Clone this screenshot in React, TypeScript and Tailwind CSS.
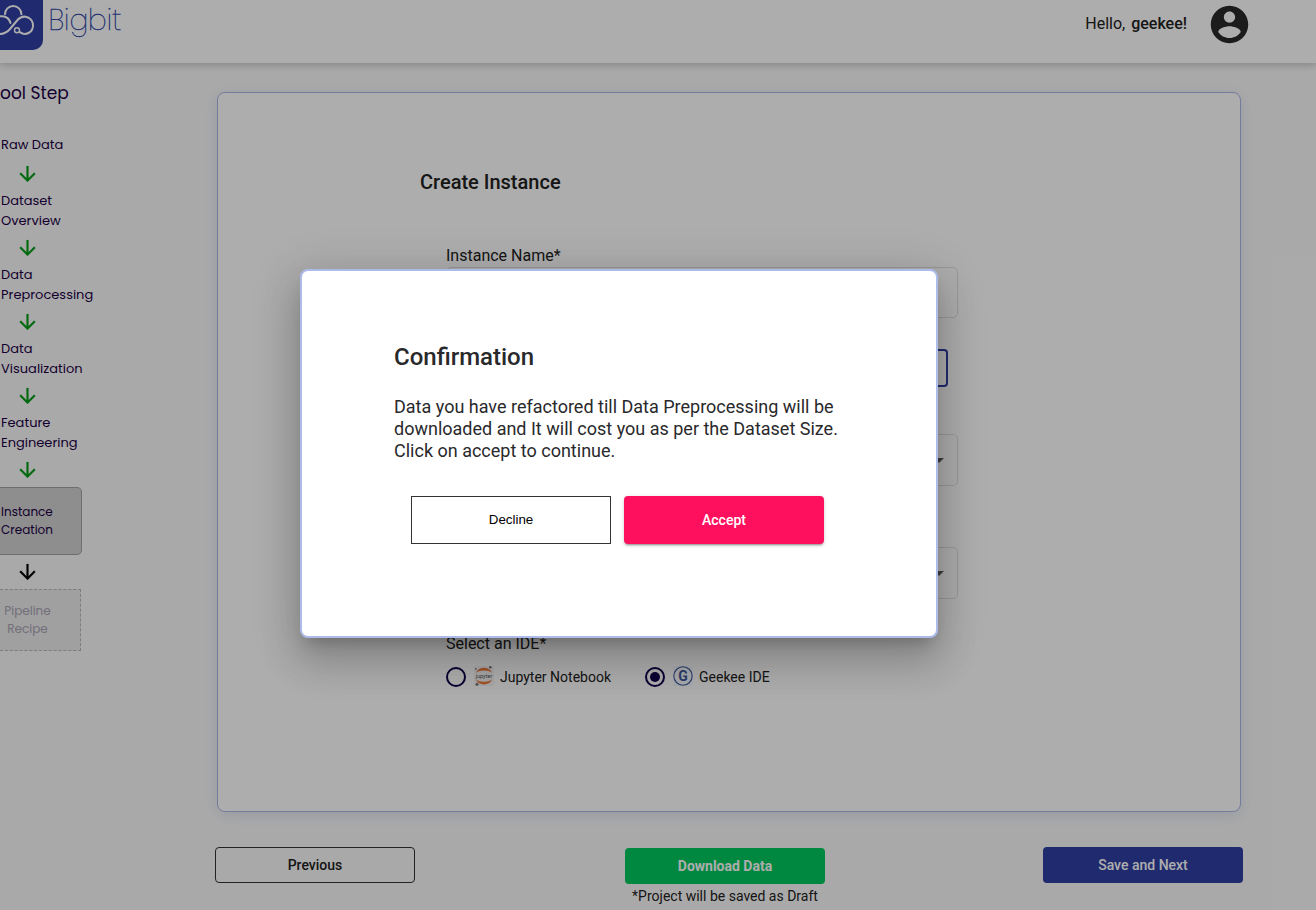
import React from "react";

const DownArrow = ({ color }: { color: string }) => (
  <div className="flex h-[34px] w-[55px] items-center justify-center">
    <svg viewBox="0.5 0 24 24" className={`h-6 w-6 ${color}`} fill="currentColor">
      <path d="M20 12l-1.41-1.41L13 16.17V4h-2v12.17l-5.58-5.59L4 12l8 8 8-8z" stroke="currentColor" strokeWidth="0.150" />
    </svg>
  </div>
);

const Step = ({ lines }: { lines: string[] }) => (
  <div className="pl-px text-[13px] leading-5 text-[#1c0045]">
    {lines.map((line) => (
      <div key={line} className="whitespace-nowrap">
        {line}
      </div>
    ))}
  </div>
);

const Logo = () => (
  <div className="flex h-[50px] w-[43px] overflow-hidden rounded-br-[10px] bg-[#303ea3]">
    <svg width="43" height="50" viewBox="0 0 43 50" fill="none" stroke="#fff" strokeWidth="2" strokeLinecap="round">
      <path d="M5 14.2a8.200 8.200 0 0 1 16.400 0" />
      <path d="M-2 16.800C4 15 9 17.500 10.500 23" />
      <path d="M-2 34C3.500 34.300 7 32.500 10 29L17.500 20C20.500 16.800 25 15.800 29 18C34.500 21.500 34.300 30 28.500 33C25.500 34.500 22.500 34 19.800 32.200" />
      <circle cx="17" cy="30.200" r="2.500" strokeWidth="1.500" />
    </svg>
  </div>
);

const JupyterIcon = () => (
  <svg width="20" height="20" viewBox="0 0 20 20" className="bg-[#f5f5f5]">
    <path d="M2 6.800C4.500 0 15.500 0 18 6.800 14 3.700 6 3.700 2 6.800z" fill="#f07a3c" />
    <path d="M2 13.500C4.500 20 15.500 20 18 13.500 14 16.500 6 16.500 2 13.500z" fill="#f07a3c" />
    <circle cx="16.300" cy="1.300" r="1.300" fill="#777" />
    <circle cx="1.800" cy="2.800" r="0.900" fill="#777" />
    <circle cx="3" cy="18.300" r="1.500" fill="#777" />
    <text x="10" y="11.600" textAnchor="middle" fontSize="5.500" fontFamily="Roboto, sans-serif" fill="#555">
      jupyter
    </text>
  </svg>
);

const GeekeeIcon = () => (
  <svg width="20" height="20" viewBox="0 0 20 20" className="bg-[#f7f9ff]">
    <circle cx="10" cy="10" r="9.200" fill="none" stroke="#3f5a9e" strokeWidth="1.100" />
    <text x="10" y="15" textAnchor="middle" fontSize="14" fontWeight="700" fontFamily="Roboto, sans-serif" fill="#3f5a9e">
      G
    </text>
  </svg>
);

const Radio = ({ checked }: { checked?: boolean }) => (
  <span className="flex h-5 w-5 items-center justify-center rounded-full border-2 border-[#12004a]">
    {checked && <span className="h-2.5 w-2.5 rounded-full bg-[#12004a]" />}
  </span>
);

const SelectBox = () => (
  <div className="flex h-[52px] w-[512px] items-center justify-end rounded-[5px] border border-black/12 pr-[13px]">
    <svg width="10" height="5" viewBox="0 0 10 5">
      <path d="M0 0h10L5 5z" fill="#5e5e5e" />
    </svg>
  </div>
);

export default function App() {
  return (
    <div className="relative h-[910px] w-[1316px] overflow-hidden bg-[#fafafa] font-[Roboto,sans-serif] text-[#212121]">
      <header className="flex h-[63px] items-start justify-between bg-white shadow-[0_1px_8px_1px_rgba(0,0,0,0.22)]">
        <div className="flex items-start">
          <Logo />
          <svg width="100" height="50" viewBox="0 0 100 50">
            <text
              x="5.500"
              y="30"
              fontSize="29.500"
              fontWeight="200"
              fontFamily="Poppins, Lato, sans-serif"
              fill="#3046a6"
              stroke="#3046a6"
              strokeWidth="0.400"
              textLength="73"
              lengthAdjust="spacingAndGlyphs"
            >
              Bigbit
            </text>
          </svg>
        </div>
        <div className="mr-[64px] mt-[2px] flex items-center">
          <span className="mr-5 mt-[-2px] text-base leading-5">
            Hello, <b className="ml-[2px] font-medium">geekee!</b>
          </span>
          <svg viewBox="0 0 24 24" className="h-[45px] w-[45px] text-[#2a2a2a]" fill="currentColor">
            <path d="M12 2C6.480 2 2 6.480 2 12s4.480 10 10 10 10-4.480 10-10S17.520 2 12 2zm0 3c1.660 0 3 1.340 3 3s-1.340 3-3 3-3-1.340-3-3 1.340-3 3-3zm0 14.200c-2.500 0-4.710-1.280-6-3.220.03-1.990 4-3.080 6-3.080 1.990 0 5.970 1.090 6 3.080-1.290 1.940-3.500 3.220-6 3.220z" />
          </svg>
        </div>
      </header>

      <div className="flex">
        <aside className="w-[215px] shrink-0 font-[Poppins,Inter,sans-serif]">
          <h2 className="mt-[18px] whitespace-nowrap text-[17px] leading-6 text-[#1c0045]">ool Step</h2>
          <div className="h-[30px]" />
          <Step lines={["Raw Data"]} />
          <div className="h-[2px]" />
          <DownArrow color="text-[#009a14]" />
          <Step lines={["Dataset", "Overview"]} />
          <DownArrow color="text-[#009a14]" />
          <Step lines={["Data", "Preprocessing"]} />
          <DownArrow color="text-[#009a14]" />
          <Step lines={["Data", "Visualization"]} />
          <DownArrow color="text-[#009a14]" />
          <Step lines={["Feature", "Engineering"]} />
          <DownArrow color="text-[#009a14]" />
          <div className="flex h-[68px] w-[82px] flex-col justify-center rounded-r-[5px] border border-l-0 border-[#a3a3a3] bg-[#d1d1d1] pl-px text-xs leading-[18px] text-[#1c0045]">
            <span>Instance</span>
            <span>Creation</span>
          </div>
          <DownArrow color="text-black" />
          <div className="flex h-[62px] w-[81px] flex-col justify-center border border-l-0 border-dashed border-[#b8b8b8] bg-[#ececec] text-xs leading-[18px] text-[#aaa3b4]">
            <span className="w-[55px] text-center">Pipeline</span>
            <span className="w-[55px] text-center">Recipe</span>
          </div>
        </aside>

        <main className="flex w-[1028px] flex-col pt-[29px]">
          <section className="ml-[2px] flex h-[720px] w-[1024px] flex-col rounded-lg border border-[#a9b8e6] bg-white pl-[202px] pt-[77px] shadow-[0_3px_14px_rgba(60,85,170,0.14)]">
            <h1 className="text-xl font-medium leading-6">Create Instance</h1>
            <div className="ml-[26px] flex flex-col pt-[52px]">
              <label className="text-base leading-5">Instance Name*</label>
              <div className="mt-px h-[51px] w-[512px] rounded-[5px] border border-black/12" />
              <div className="mt-[31px] h-[38px] w-[502px] rounded border-2 border-[#303ea3]" />
              <div className="h-[47px]" />
              <SelectBox />
              <div className="h-[61px]" />
              <SelectBox />
              <label className="mt-[35px] text-base leading-5">Select an IDE*</label>
              <div className="mt-[13px] flex h-5 items-center text-sm">
                <Radio />
                <span className="ml-2 mr-1.5 mt-[-2px]">
                  <JupyterIcon />
                </span>
                <span className="w-[145px]">Jupyter Notebook</span>
                <Radio checked />
                <span className="ml-2 mr-1.5 mt-[-2px]">
                  <GeekeeIcon />
                </span>
                <span>Geekee IDE</span>
              </div>
            </div>
          </section>

          <div className="mt-[35px] flex items-start justify-between text-sm">
            <button className="h-9 w-[200px] rounded border border-[#333] font-medium">Previous</button>
            <div className="mt-px flex flex-col items-center pr-[8px]">
              <button className="h-9 w-[200px] rounded bg-[#00c85f] font-bold text-white">Download Data</button>
              <span className="mt-[2px] leading-5">*Project will be saved as Draft</span>
            </div>
            <button className="h-9 w-[200px] rounded bg-[#303ea3] font-medium text-white">Save and Next</button>
          </div>
        </main>
      </div>

      <div className="absolute inset-0 bg-black/32">
        <div
          role="dialog"
          className="ml-[300px] mt-[269px] flex h-[369px] w-[638px] flex-col rounded-lg border-2 border-[#adbbea] bg-white pl-[92px] pt-[70px] text-[#29292c] shadow-[0_11px_15px_-7px_rgba(0,0,0,0.2),0_24px_38px_3px_rgba(0,0,0,0.14),0_9px_46px_8px_rgba(0,0,0,0.12)]"
        >
          <h2 className="text-2xl font-medium leading-8">Confirmation</h2>
          <p className="mt-[23px] w-[460px] text-lg leading-[22px]">
            Data you have refactored till Data Preprocessing will be
            <br />
            downloaded and It will cost you as per the Dataset Size.
            <br />
            Click on accept to continue.
          </p>
          <div className="ml-[17px] mt-[34px] flex gap-[13px]">
            <button className="h-12 w-[200px] border border-[#333] font-['Liberation_Sans',sans-serif] text-[13.333px] text-black">
              Decline
            </button>
            <button className="h-12 w-[200px] rounded bg-[#ff105e] text-sm font-medium text-white shadow-[0_3px_1px_-2px_rgba(0,0,0,0.2),0_2px_2px_rgba(0,0,0,0.14),0_1px_5px_rgba(0,0,0,0.12)]">
              Accept
            </button>
          </div>
        </div>
      </div>
    </div>
  );
}
